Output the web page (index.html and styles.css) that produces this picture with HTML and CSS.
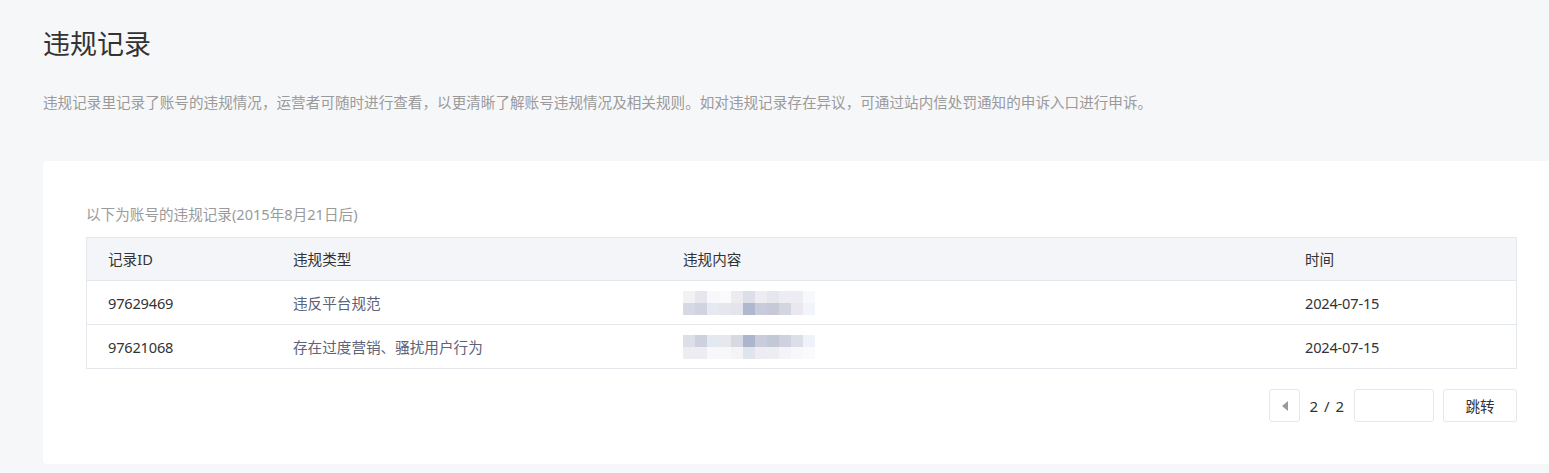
FILE: index.html
```html
<!DOCTYPE html>
<html lang="zh-CN">
<head>
<meta charset="utf-8">
<title>违规记录</title>
<link rel="stylesheet" href="styles.css">
</head>
<body>
<div class="page">
  <h1 class="title">违规记录</h1>
  <p class="desc">违规记录里记录了账号的违规情况，运营者可随时进行查看，以更清晰了解账号违规情况及相关规则。如对违规记录存在异议，可通过站内信处罚通知的申诉入口进行申诉。</p>
  <section class="card">
    <p class="caption">以下为账号的违规记录(2015年8月21日后)</p>
    <div class="table">
      <div class="row head">
        <div class="cell">记录ID</div>
        <div class="cell">违规类型</div>
        <div class="cell">违规内容</div>
        <div class="cell">时间</div>
      </div>
      <div class="row">
        <div class="cell">97629469</div>
        <div class="cell type">违反平台规范</div>
        <div class="cell">
          <svg class="blur" width="132" height="24" viewBox="0 0 132 24">
            <g>
              <rect x="0" y="0" width="12" height="12" fill="#f2f2f5"/>
              <rect x="12" y="0" width="12" height="12" fill="#e6e6ee"/>
              <rect x="24" y="0" width="12" height="12" fill="#f8f8fa"/>
              <rect x="36" y="0" width="12" height="12" fill="#fafafc"/>
              <rect x="48" y="0" width="12" height="12" fill="#ececf0"/>
              <rect x="60" y="0" width="12" height="12" fill="#dcdfe9"/>
              <rect x="72" y="0" width="12" height="12" fill="#ececf2"/>
              <rect x="84" y="0" width="12" height="12" fill="#e6e6ee"/>
              <rect x="96" y="0" width="12" height="12" fill="#ececf2"/>
              <rect x="108" y="0" width="12" height="12" fill="#ececf2"/>
              <rect x="120" y="0" width="12" height="12" fill="#f6f8fb"/>
              <rect x="0" y="12" width="12" height="12" fill="#d6d8e3"/>
              <rect x="12" y="12" width="12" height="12" fill="#d1d4e0"/>
              <rect x="24" y="12" width="12" height="12" fill="#e6e9f0"/>
              <rect x="36" y="12" width="12" height="12" fill="#e5e7ed"/>
              <rect x="48" y="12" width="12" height="12" fill="#e4e4ea"/>
              <rect x="60" y="12" width="12" height="12" fill="#b0b8cf"/>
              <rect x="72" y="12" width="12" height="12" fill="#c8cbd9"/>
              <rect x="84" y="12" width="12" height="12" fill="#c6cad8"/>
              <rect x="96" y="12" width="12" height="12" fill="#d3d5e1"/>
              <rect x="108" y="12" width="12" height="12" fill="#e8e8ee"/>
              <rect x="120" y="12" width="12" height="12" fill="#f1f5fa"/>
            </g>
          </svg>
        </div>
        <div class="cell">2024-07-15</div>
      </div>
      <div class="row">
        <div class="cell">97621068</div>
        <div class="cell type">存在过度营销、骚扰用户行为</div>
        <div class="cell">
          <svg class="blur" width="132" height="24" viewBox="0 0 132 24">
            <g>
              <rect x="0" y="0" width="12" height="12" fill="#dcdee8"/>
              <rect x="12" y="0" width="12" height="12" fill="#cdd0dd"/>
              <rect x="24" y="0" width="12" height="12" fill="#e4e8f0"/>
              <rect x="36" y="0" width="12" height="12" fill="#e6e8ee"/>
              <rect x="48" y="0" width="12" height="12" fill="#d6d8e2"/>
              <rect x="60" y="0" width="12" height="12" fill="#acb5cc"/>
              <rect x="72" y="0" width="12" height="12" fill="#c9ccda"/>
              <rect x="84" y="0" width="12" height="12" fill="#c3c8d7"/>
              <rect x="96" y="0" width="12" height="12" fill="#cfd2de"/>
              <rect x="108" y="0" width="12" height="12" fill="#dcdfe7"/>
              <rect x="120" y="0" width="12" height="12" fill="#eef3f9"/>
              <rect x="0" y="12" width="12" height="12" fill="#ececf2"/>
              <rect x="12" y="12" width="12" height="12" fill="#ececf2"/>
              <rect x="24" y="12" width="12" height="12" fill="#f8f8fa"/>
              <rect x="36" y="12" width="12" height="12" fill="#f8f8fa"/>
              <rect x="48" y="12" width="12" height="12" fill="#f4f4f6"/>
              <rect x="60" y="12" width="12" height="12" fill="#e0e4ec"/>
              <rect x="72" y="12" width="12" height="12" fill="#ececf2"/>
              <rect x="84" y="12" width="12" height="12" fill="#eceef2"/>
              <rect x="96" y="12" width="12" height="12" fill="#f4f4f8"/>
              <rect x="108" y="12" width="12" height="12" fill="#f8f8fa"/>
              <rect x="120" y="12" width="12" height="12" fill="#fafafc"/>
            </g>
          </svg>
        </div>
        <div class="cell">2024-07-15</div>
      </div>
    </div>
    <div class="pager">
      <button class="prev" type="button" aria-label="上一页">
        <svg width="6" height="10" viewBox="0 0 6 10"><path d="M6 0 L0 5 L6 10 Z" fill="#9a9a9a"/></svg>
      </button>
      <span class="pagenum">2 / 2</span>
      <input class="jump-input" type="text">
      <button class="jump" type="button">跳转</button>
    </div>
  </section>
</div>
</body>
</html>
```

FILE: styles.css
```css
* {
  box-sizing: border-box;
}

html, body {
  margin: 0;
  padding: 0;
}

body {
  background: #f6f7f9;
  font-family: "Noto Sans", "Noto Sans CJK SC", sans-serif;
  color: #333;
  width: 1549px;
  overflow: hidden;
}

.page {
  padding: 26px 0 0 43px;
}

.title {
  margin: 0;
  font-size: 27px;
  line-height: 36px;
  font-weight: 400;
  color: #333;
}

.desc {
  margin: 30px 0 0;
  font-size: 14.6px;
  line-height: 20px;
  color: #9a9a9a;
}

.card {
  margin-top: 49px;
  background: #fff;
  border-radius: 4px 0 0 4px;
  padding: 43px 32px 42px 43px;
  height: 303px;
}

.caption {
  margin: 0;
  font-size: 14.6px;
  line-height: 20px;
  color: #9a9a9a;
}

.table {
  margin-top: 13px;
  border: 1px solid #e4e7ec;
  border-bottom: none;
}

.row {
  display: grid;
  grid-template-columns: 185px 390px 622px 1fr;
  height: 44px;
  border-bottom: 1px solid #e4e7ec;
  align-items: center;
  font-size: 14.6px;
  color: #333;
}

.row.head {
  height: 43px;
  background: #f4f5f9;
}

.cell {
  padding-left: 21px;
  line-height: 20px;
  display: flex;
  align-items: center;
  letter-spacing: -0.2px;
}

.row.head .cell,
.type {
  letter-spacing: 0;
}

.type {
  color: #5c6278;
}

.blur {
  display: block;
}

.pager {
  display: flex;
  justify-content: flex-end;
  align-items: center;
  margin-top: 20px;
  height: 33px;
}

.prev {
  width: 31px;
  height: 33px;
  border: 1px solid #e4e7ec;
  border-radius: 3px;
  background: #fff;
  display: flex;
  align-items: center;
  justify-content: center;
  padding: 0;
}

.pagenum {
  margin: 0 10px 0 9px;
  font-size: 15px;
  word-spacing: 2px;
  color: #333;
}

.jump-input {
  width: 80px;
  height: 33px;
  border: 1px solid #e4e7ec;
  border-radius: 3px;
  background: #fff;
  margin: 0;
}

.jump {
  margin-left: 9px;
  width: 74px;
  height: 33px;
  border: 1px solid #e4e7ec;
  border-radius: 3px;
  background: #fff;
  font-family: inherit;
  font-size: 14.6px;
  color: #333;
  padding: 0;
}
```
